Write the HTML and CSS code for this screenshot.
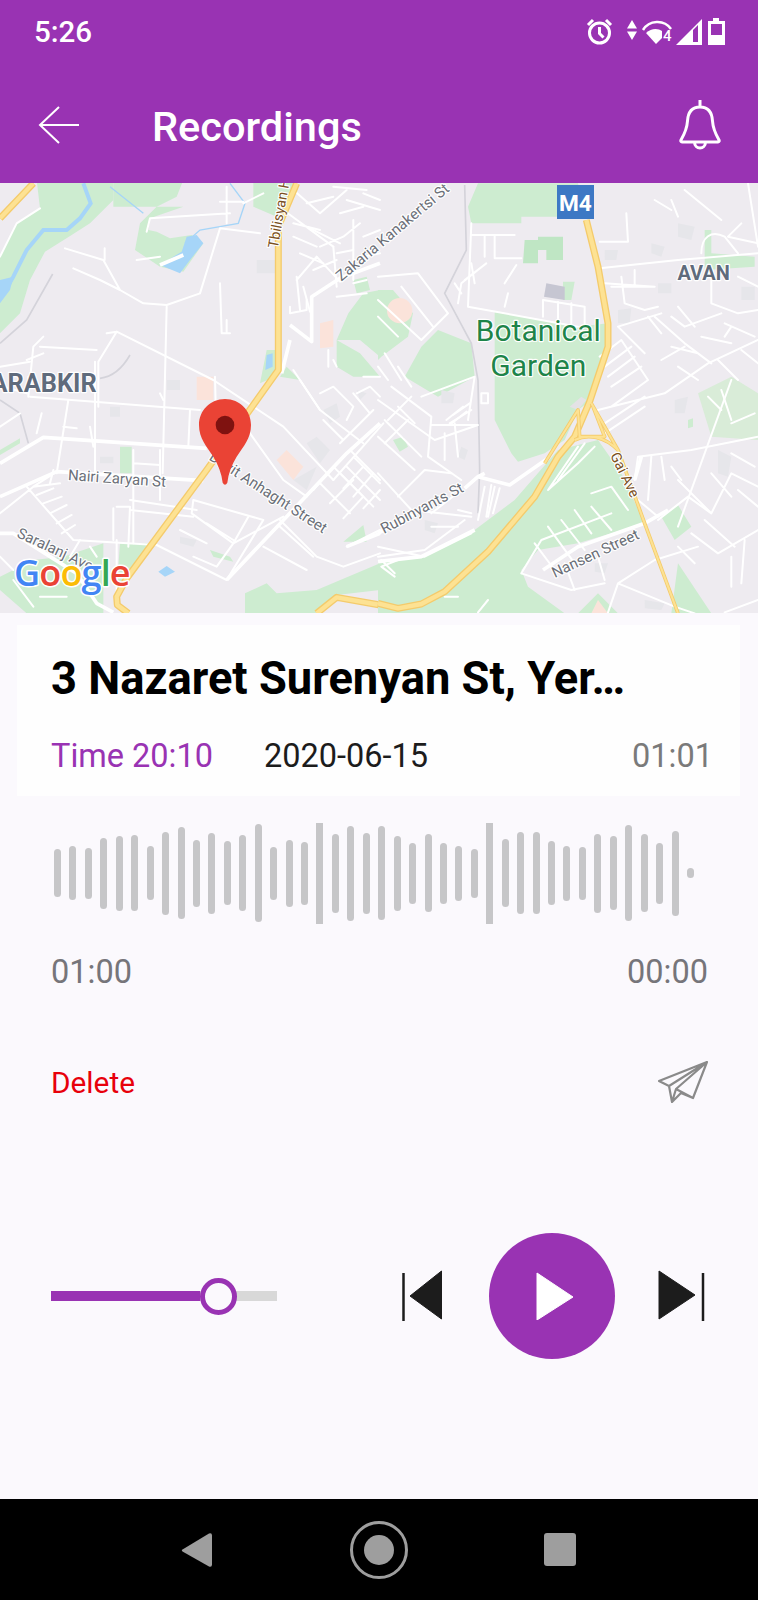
FILE: index.html
```html
<!DOCTYPE html>
<html lang="en">
<head>
<meta charset="utf-8">
<title>Recordings</title>
<link rel="stylesheet" href="styles.css">
</head>
<body>
<div class="page">
  <header class="header">
    <div class="status">
      <span class="clock">5:26</span>
      <svg class="status-icons" viewBox="0 0 140 30" width="140" height="30">
        <g class="ic-line">
          <circle cx="13.5" cy="16" r="10"/>
          <path d="M13.5 10v6.5l4 4"/>
          <path d="M2 8l5-5M25 8l-5-5"/>
        </g>
        <path class="ic-fill" d="M46 3l5 8.500h-10zM41 14.500h10l-5 8.500z"/>
        <path class="ic-line-thin" d="M57 13C63 3 78 2 85 12"/>
        <path class="ic-fill" d="M60 16C65 11 72 11 76 14L76 21L70 27Z"/>
        <text class="wifi-4" x="77" y="24">4</text>
        <path class="ic-fill" fill-rule="evenodd" d="M90 28L116 2V28ZM107 13V25H112V8Z"/>
        <path class="ic-fill" fill-rule="evenodd" d="M127 1h6v3h6v24h-17V4h5zM125 7v11h11V7z"/>
      </svg>
    </div>
    <div class="appbar">
      <svg class="back" viewBox="0 0 42 38" width="42" height="38"><path d="M21 1L2 19L21 37M2 19H41"/></svg>
      <h1 class="screen-title">Recordings</h1>
      <svg class="bell" viewBox="0 0 42 51" width="42" height="51"><path d="M21 1V8M21 8C12.500 8 9 14 8.500 22C8 30 5.500 35 2 41C1.500 42 2 43 3 43H39C40 43 40.500 42 40 41C36.500 35 34 30 33.500 22C33 14 29.500 8 21 8ZM15.500 43C15.500 51 26.500 51 26.500 43"/></svg>
    </div>
  </header>

  <svg class="map" viewBox="0 0 758 430" width="758" height="430">
    <rect class="land" width="758" height="430"/>

    <g transform="translate(0 -3) scale(.33333)">
      <path class="green" d="M110 0H340V60L270 130L215 165L135 215L90 300L60 400L0 460V230L50 130L120 85Z"/>
      <path class="green" d="M340 0H550L530 50L470 80L420 130L405 210L480 260L550 275L610 190L575 165L510 175L470 155L445 150L450 115L550 80H340Z"/>
      <path class="green" d="M760 0H885L830 110L760 80Z"/>
      <path class="green" d="M780 610L800 510H825V590ZM360 800H395V880H360ZM1030 1085L1090 1035L1100 1085ZM630 1110L690 1130L700 1145L640 1130ZM0 810L60 775L60 790L0 825Z"/>
      <path class="green" d="M1045 400L1090 340L1140 330V530L1080 480L1010 480ZM1010 480L1080 520L1140 590H1060L1010 560Z"/>
      <path class="green" d="M190 1130L310 1090V1300H80L0 1230V1190L100 1140ZM360 1090H450L370 1230H350Z"/>
      <path class="green" d="M735 1300V1240L800 1210L830 1240L950 1230L1140 1150V1230L1010 1245L950 1300Z"/>
      <path class="green" d="M840 590L860 560L900 600ZM1060 300L1100 290L1110 330L1070 340Z"/>
      <path class="pink" d="M590 590H640V660H590ZM830 840L860 810L910 860L880 900ZM960 430L1000 420V500L960 505Z"/>
      <path class="gray-block" d="M920 790L950 770L990 810L960 850ZM970 690L1010 670L1020 710L990 730ZM880 900L950 860L920 930ZM770 240H830V280H770ZM540 1070L590 1080L580 1100L540 1090ZM1070 630L1100 640L1080 660ZM500 600H540V630H500ZM330 680H360V710H330ZM300 830H340V850H300Z"/>
      <path class="water-line" d="M250 10L272 70L240 115L200 150L130 150L80 210L40 290L12 340"/>
      <path class="water-line-thin" d="M330 20L430 100M690 10L735 70L715 130L600 150L555 190"/>
      <path class="water" d="M0 300L40 290L30 330L0 370ZM480 255L540 280L570 240L610 190L590 165L560 170L545 215ZM796 570L800 525L818 520L818 560ZM475 1175L500 1158L525 1175L495 1190Z"/>
      <path class="rail" d="M158 282L80 420L0 490M390 525C370 560 340 590 300 595M0 660L60 700L85 790"/>

      <g class="r">
        <path d="M120 85L50 130L0 230M195 205L310 240L360 330L430 370L500 375L600 340L660 145L780 160M220 265L300 300L360 330M314 205L314 240"/>
        <path d="M440 155L450 115L690 100M680 20V130M660 65H730M730 70L790 40M410 240L480 230"/>
        <path d="M500 380L488 880M660 310L665 460H690M680 420V455"/>
        <path d="M320 460L350 455L640 600L850 740L1000 900M350 455L295 545V680"/>
        <path d="M90 650L600 690M285 545V880M120 500L290 510M130 470L100 500L85 650L85 590"/>
        <path d="M205 660L170 880M190 740L230 745M125 700L110 760M270 740L280 800M0 560L90 545M0 740L60 700M80 540L130 520M10 620L80 640"/>
        <path d="M400 810V960H390M400 850L480 855M480 810V960M400 960V1090M390 960L590 990M390 990L580 1010"/>
        <path d="M570 690L565 800M645 590L650 800M480 640L490 660"/>
        <path d="M0 1000L100 920L170 875M80 920L220 1080L470 1095M100 920L180 910M110 945L160 925M130 970L185 950M150 1000L200 975M170 1030L215 1005M185 1060L225 1035"/>
        <path d="M350 980H390L385 1100M340 985V1080M350 1080V1240"/>
        <path d="M580 960L790 1020L680 1200L470 1095M580 960L575 1000L700 1090L850 1010M700 1090L650 1160L580 1130M745 1010L700 1090M620 1030L700 1080M540 1050L620 1090M790 1100L920 1170"/>
        <path d="M1000 900L1150 730M1050 810L1140 900M1000 860L1090 950M960 910L1050 1000M1090 950L1030 1015M1060 900L990 970M1000 860L940 930"/>
        <path d="M1020 880L1120 980M1040 860L1140 960M1065 835L1140 910M1030 925L1090 860M1060 950L1120 880M1090 985L1140 930"/>
        <path d="M840 1020L950 1130L1030 1160L1140 1120M1040 1100L1140 1050M840 1040L940 1130"/>
        <path d="M900 600L960 690L1090 790M960 640L1000 620L1060 680L1040 720M1070 640L1110 620L1140 650M1090 590H1140M1000 540L1010 560M985 510L985 560"/>
        <path d="M870 380V400L920 390V360M890 290L900 390M890 300L950 230L1020 305M940 270L1010 240M960 200L1030 170L1080 130M1000 200L1010 320M1060 120V300M1060 310L1100 300M1010 350L1100 340M920 140L1020 190"/>
        <path d="M850 90L1000 200M880 30L960 100L1040 30M1040 60L1140 90M920 70L1000 50M880 130L960 150M880 170L950 200M900 220L970 250M910 320L930 395M1020 100L1090 80M1090 40L1140 60M1090 170L1140 150M1090 230L1140 220M1000 20L1100 30M1010 220L1060 210"/>
        <path d="M750 760L850 900L920 950M880 570L960 690M970 720L1030 780L1120 690M1060 640L1110 700M1020 790L1080 730"/>
        <path d="M240 1080L210 1130M270 1100L290 1130M160 870L150 910M0 1130L40 1170M40 1200L100 1280M120 1250L200 1250"/>
      </g>
      <g class="rw">
        <path d="M0 850L130 772L620 805"/>
        <path d="M0 950L170 875L610 902"/>
        <path d="M870 435L935 485L935 350L1020 295L1140 250"/>
        <path d="M845 580L870 480"/>
        <path d="M680 1200L1040 820L1140 730"/>
        <path d="M1040 1100L1140 1060"/>
        <path d="M0 1060H40L230 1180L290 1270L340 1297"/>
        <path d="M480 255L550 225"/>
      </g>
      <g class="hw">
        <path class="hw-o" d="M0 115L100 10M890 10L835 140V570L620 870L380 1195L350 1250L352 1275L385 1300M950 1300L1010 1252L1140 1275"/>
        <path class="hw-i" d="M0 115L100 10M890 10L835 140V570L620 870L380 1195L350 1250L352 1275L385 1300M950 1300L1010 1252L1140 1275"/>
      </g>
      <text class="lbl road" transform="translate(833 206) rotate(-80)">Tbilisyan Hwy</text>
      <text class="lbl dist" x="290" y="635" text-anchor="end">ARABKIR</text>
      <text class="lbl street" transform="translate(203 900) rotate(4)">Nairi Zaryan St</text>
      <text class="lbl street" transform="translate(625 838) rotate(33)">Davit Anhaght Street</text>
      <text class="lbl street" transform="translate(48 1070) rotate(25)">Saralanj Ave</text>
      <text class="lbl street" transform="translate(1024 305) rotate(-40)">Zakaria Kanakertsi St</text>
      <text class="lbl google" x="42" y="1218"><tspan class="g-b">G</tspan><tspan class="g-r">o</tspan><tspan class="g-y">o</tspan><tspan class="g-b">g</tspan><tspan class="g-g">l</tspan><tspan class="g-r">e</tspan></text>
      <path class="pin" d="M675 657C720 657 753 692 753 735C753 775 730 800 710 830C695 855 685 880 682 908Q675 920 668 908C665 880 655 855 640 830C620 800 597 775 597 735C597 692 630 657 675 657Z"/>
      <circle class="pin-dot" cx="675" cy="735" r="28"/>
    </g>

    <g transform="translate(378 -3) scale(.33333)">
      <path class="green" d="M270 80L300 10H600L625 110H430V130H280Z"/>
      <path class="green-soft" d="M440 180H480V170H555V240H505V210H480V250H435Z"/>
      <path class="green" d="M350 395L600 440L690 430L680 520L640 660L600 690L560 780L500 820L420 845L400 820L350 720Z"/>
      <path class="green" d="M0 1300V1145L130 1130L290 1050L410 960L540 810L660 780L730 880L800 1030L600 1090L480 1110L430 1170L450 1220L560 1300Z"/>
      <path class="green" d="M0 330H45L105 400L90 470L10 530L0 540ZM130 500L180 450L280 490L290 590L180 650L80 590ZM850 1010L900 975L940 1040L890 1080ZM880 1300L900 1150L1000 1300ZM980 150H1000V220L1130 230V260L980 270ZM600 1300L660 1240L720 1300ZM45 780L75 770L90 800L65 815ZM930 720L945 715L945 740L930 745ZM555 305H590L580 360H555Z"/>
      <path class="green-pale" d="M960 640L1060 590L1140 640V780L1000 770Z"/>
      <circle class="pink" cx="65" cy="392" r="38"/>
      <path class="pink" d="M640 1300L660 1260L690 1300Z"/>
      <path class="gray-dot" d="M505 310L560 320L560 360L498 350Z"/>
      <path class="gray-block" d="M820 190L860 200L850 230L820 220ZM680 210H720L715 240H680ZM720 390L760 385L755 430L720 430ZM900 130L950 140L940 180L900 170ZM840 310L880 310V340L840 340ZM1090 320H1130V360H1090ZM890 660L930 650L920 700L890 700ZM190 630L230 640L225 670L190 670ZM1020 810L1060 830L1050 890L1020 880ZM650 1150L690 1150L680 1180L650 1175ZM800 1260L860 1270L850 1290L800 1285ZM250 800L270 810L260 840L240 830ZM140 1020L180 1030L170 1060L140 1050Z"/>
      <path class="rail" d="M260 15L265 210L200 340L280 490L300 600L305 870L300 1000"/>
      <g class="r">
        <path d="M0 290L120 280L210 400L130 480L0 360M70 320L165 440M0 410L60 470M280 130L270 380L600 440M280 165H410M320 165V230M350 165V235H430M415 255L380 310"/>
        <path d="M240 370L250 310L325 250L260 300M230 310L250 340M280 250L290 310M390 340L380 380"/>
        <path d="M495 360V410M495 360L620 380V440M540 365V415M580 370V430"/>
        <path d="M0 660L170 780L300 735H160M40 620L160 710L150 830L250 900M20 720L130 830M0 770L110 870M130 650L290 590L270 720M200 760V840M230 730L240 830M280 690L215 730M310 640V670H330V640Z"/>
        <path d="M205 720L255 680M215 735L265 695M225 705L275 670M0 560L30 600M20 520L70 600M60 560L100 620M100 650L30 720M60 680L110 730M90 720L20 790"/>
        <path d="M0 880L100 990L280 1010M60 950L140 870L220 880M160 1000L250 930M0 1100L140 1130L280 1060M60 1140L10 1160L50 1190"/>
        <path d="M340 915L325 1010M365 925L345 1000"/>
        <path d="M665 185H750L745 100M665 265L900 240L1140 220M680 310L830 320L700 320M730 290L740 370L800 390L840 380M770 270V320M665 530L730 480L810 600L700 680M680 560L760 500M690 590L770 530M700 620L790 560M800 520L720 440L850 400M660 690L860 640L990 550L1140 480M680 730L800 650M680 760L800 680"/>
        <path d="M880 410L920 440L1030 400M830 410L920 490L1000 550M900 380L950 440M1000 280V370L1080 400L1140 390M1040 430L1130 470M1040 470L1060 440M970 470L1060 490M810 410L850 460M880 500L960 520M850 540L920 500M900 560L960 600M1090 510L1140 550M1020 540L1080 600"/>
        <path d="M970 220C970 170 1000 150 1040 170L1080 220M1090 130L1050 170L1140 190M880 60L900 110M920 30L1030 120M1110 10L1140 200M830 60L880 90M1080 290L1140 320"/>
        <path d="M770 900L780 830L940 810L1140 770M820 830L810 960M850 830L860 900M880 860L910 900M780 960L840 1010M990 650L1030 690M1030 630L1060 720M1060 730L1130 700"/>
        <path d="M840 1020L930 950L1000 1000L1060 880L1140 920M900 900L1000 1000M1000 880L1060 950M940 1060L1020 1120L1140 1050M980 1020L1070 1100M1060 1130V1220M1100 1080L1090 1210M1060 820L1130 860M1080 930L1140 980"/>
        <path d="M690 1297L720 1210L830 1140L960 1100M720 1210L890 1280L950 1300M900 1100L950 1150M1040 1297L1140 1260"/>
        <path d="M430 1180L490 1080L700 1000M470 1090L530 1170M510 1040L590 1150M550 1020L620 1110M590 990L640 1060M640 980L700 1050M430 1180L580 1230L680 1210M560 1150L590 1230M660 1130L680 1200M640 940L700 920L750 990"/>
        <path d="M0 1130L140 1110L260 1020M300 1297L330 1260M200 1250L240 1250M10 1140L50 1180M320 920L300 1020M350 920L330 1010"/>
        <path d="M600 800L510 930L600 850L650 800M620 790L540 900"/>
        <path d="M240 990L280 1000M160 1040L240 1040"/>
        <path d="M900 1040L1060 600"/>
      </g>
      <g class="rw">
        <path d="M0 1060L130 990M260 925L300 890L395 915L510 835M300 890L320 880"/>
        <path d="M770 900L790 830"/>
        <path d="M800 1030L870 990"/>
        <path d="M495 1170L600 1100L800 1030"/>
        <path d="M0 1145L130 1130L290 1050"/>
      </g>
      <path class="land-patch" d="M575 680L610 650L625 660L600 690Z"/>
      <g class="hw">
        <path class="hw-o" d="M0 1270L60 1285L130 1272L200 1235L330 1115L470 950L540 830L590 770L635 665L690 500V430L660 260L625 120"/>
        <path class="hw-i" d="M0 1270L60 1285L130 1272L200 1235L330 1115L470 950L540 830L590 770L635 665L690 500V430L660 260L625 120"/>
        <path class="hw-o thin" d="M640 670L720 810L800 1030L900 1300M500 850L600 690L605 770L660 770L680 770L645 680M590 780C630 760 680 770 720 810"/>
        <path class="hw-i thin" d="M640 670L720 810L800 1030L900 1300M500 850L600 690L605 770L660 770L680 770L645 680M590 780C630 760 680 770 720 810"/>
      </g>
      <text class="lbl street" transform="translate(18 1062) rotate(-28)">Rubinyants St</text>
      <text class="lbl road" transform="translate(696 826) rotate(64)">Gai Ave</text>
      <text class="lbl street" transform="translate(530 1194) rotate(-25)">Nansen Street</text>
      <text class="lbl dist avan" x="977" y="300" text-anchor="middle">AVAN</text>
      <text class="lbl poi" x="481" y="483" text-anchor="middle">Botanical</text>
      <text class="lbl poi" x="481" y="587" text-anchor="middle">Garden</text>
      <rect class="shield" x="537" y="15" width="111" height="102"/>
      <text class="shield-text" x="592" y="92" text-anchor="middle">M4</text>
    </g>
  </svg>

  <main class="content">
    <section class="card">
      <h2 class="place">3 Nazaret Surenyan St, Yer…</h2>
      <div class="meta">
        <span class="meta-time">Time 20:10</span>
        <span class="meta-date">2020-06-15</span>
        <span class="meta-length">01:01</span>
      </div>
    </section>

    <div class="wave">
      <i class="bar" style="height:48px"></i>
      <i class="bar" style="height:54px"></i>
      <i class="bar" style="height:51px"></i>
      <i class="bar" style="height:71px"></i>
      <i class="bar" style="height:75px"></i>
      <i class="bar" style="height:76px"></i>
      <i class="bar" style="height:54px"></i>
      <i class="bar" style="height:83px"></i>
      <i class="bar" style="height:92px"></i>
      <i class="bar" style="height:67px"></i>
      <i class="bar" style="height:81px"></i>
      <i class="bar" style="height:64px"></i>
      <i class="bar" style="height:76px"></i>
      <i class="bar" style="height:98px"></i>
      <i class="bar" style="height:53px"></i>
      <i class="bar" style="height:67px"></i>
      <i class="bar" style="height:63px"></i>
      <i class="bar bar-flat" style="height:101px"></i>
      <i class="bar" style="height:79px"></i>
      <i class="bar" style="height:95px"></i>
      <i class="bar" style="height:81px"></i>
      <i class="bar" style="height:94px"></i>
      <i class="bar" style="height:75px"></i>
      <i class="bar" style="height:61px"></i>
      <i class="bar" style="height:78px"></i>
      <i class="bar" style="height:61px"></i>
      <i class="bar" style="height:55px"></i>
      <i class="bar" style="height:49px"></i>
      <i class="bar bar-flat" style="height:101px"></i>
      <i class="bar" style="height:68px"></i>
      <i class="bar" style="height:82px"></i>
      <i class="bar" style="height:82px"></i>
      <i class="bar" style="height:64px"></i>
      <i class="bar" style="height:55px"></i>
      <i class="bar" style="height:53px"></i>
      <i class="bar" style="height:79px"></i>
      <i class="bar" style="height:74px"></i>
      <i class="bar" style="height:96px"></i>
      <i class="bar" style="height:78px"></i>
      <i class="bar" style="height:61px"></i>
      <i class="bar" style="height:85px"></i>
      <i class="bar" style="height:10px"></i>
    </div>

    <div class="times">
      <span>01:00</span>
      <span>00:00</span>
    </div>

    <div class="actions">
      <span class="delete">Delete</span>
      <svg class="send" viewBox="0 0 50 42" width="50" height="42"><path d="M49 1L1 20L11 25L14 41L23 32L35 37ZM49 1L11 25M49 1L18 28L14 41M18 28L35 37"/></svg>
    </div>

    <div class="player">
      <div class="slider">
        <div class="slider-fill"></div>
        <div class="slider-rest"></div>
        <div class="slider-thumb"></div>
      </div>
      <div class="controls">
        <svg class="skip" viewBox="0 0 42 52" width="42" height="52"><path class="skip-bar" d="M1.500 3V51"/><path class="skip-tri" d="M8 26L39.500 1V49Z"/></svg>
        <button class="play" type="button" aria-label="Play">
          <svg viewBox="0 0 38 48" width="38" height="48"><path d="M1 1L37 25L1 48Z"/></svg>
        </button>
        <svg class="skip" viewBox="0 0 47 52" width="47" height="52"><path class="skip-tri" d="M1 1L37 25L1 49Z"/><path class="skip-bar" d="M45 3V51"/></svg>
      </div>
    </div>
  </main>

  <nav class="navbar">
    <svg viewBox="0 0 32 36" width="32" height="36"><path class="nav-fill" d="M1.500 17.500L28 1.500Q31 0.500 31 3.500V32.500Q31 35.500 28 34.500L1.500 19.500Q0 18.500 1.500 17.500Z"/></svg>
    <svg viewBox="0 0 60 60" width="60" height="60"><circle class="nav-ring" cx="30" cy="30" r="27.500"/><circle class="nav-fill" cx="30" cy="30" r="15"/></svg>
    <span class="nav-square"></span>
  </nav>
</div>
</body>
</html>
```

FILE: styles.css
```css
* { box-sizing: border-box; }
html, body { margin: 0; padding: 0; }
body { font-family: Roboto, "Liberation Sans", sans-serif; background: #fbf9fd; }

.page { width: 758px; height: 1600px; display: flex; flex-direction: column; overflow: hidden; }

/* header */
.header { height: 183px; background: #9933b3; color: #fff; flex: none; }
.status { height: 64px; padding: 0 32px 0 34px; display: flex; align-items: center; justify-content: space-between; }
.clock { font-size: 29.500px; font-weight: 500; }
.status-icons { display: block; }
.ic-line { fill: none; stroke: #fff; stroke-width: 3; }
.ic-line-thin { fill: none; stroke: #fff; stroke-width: 2.500; }
.ic-fill { fill: #fff; }
.wifi-4 { fill: #fff; font-size: 15px; font-weight: 500; font-family: Roboto, sans-serif; }

.appbar { height: 119px; padding: 0 37px 0 38px; display: flex; align-items: center; }
.back { fill: none; stroke: #fff; stroke-width: 2; flex: none; margin-top: 2px; }
.screen-title { margin: 5px 0 0 72px; font-size: 41.500px; font-weight: 500; flex: 1; }
.bell { fill: none; stroke: #fff; stroke-width: 3; flex: none; margin-top: 2px; }

/* map */
.map { display: block; flex: none; }
.land { fill: #eeebf0; }
.green { fill: #cdecd0; }
.green-soft { fill: #bfe6c4; }
.green-pale { fill: #d9ecd8; }
.pink { fill: #fbe3da; }
.gray-block { fill: #e6e6ea; }
.gray-dot { fill: #c6c6d2; }
.land-patch { fill: #e4e2e6; }
.water { fill: #a6d5f8; }
.water-line { fill: none; stroke: #a6d5f8; stroke-width: 12; }
.water-line-thin { fill: none; stroke: #a6d5f8; stroke-width: 4; }
.rail { fill: none; stroke: #d4d3da; stroke-width: 5; }
.r { fill: none; stroke: #fff; stroke-width: 6; stroke-linejoin: round; stroke-linecap: round; }
.rw { fill: none; stroke: #fff; stroke-width: 11; stroke-linejoin: round; }
.hw { fill: none; stroke-linejoin: round; }
.hw-o { stroke: #f4cb6c; stroke-width: 21; }
.hw-i { stroke: #fde293; stroke-width: 13; }
.hw-o.thin { stroke-width: 11; }
.hw-i.thin { stroke-width: 6; }
.lbl { font-family: Roboto, sans-serif; paint-order: stroke; stroke: #fff; stroke-width: 7; stroke-linejoin: round; }
.street { font-size: 45px; fill: #6b6f78; }
.road { font-size: 43px; fill: #7a4f1d; }
.dist { font-size: 76px; font-weight: 700; fill: #5f6b7c; }
.avan { font-size: 60px; }
.poi { font-size: 90px; fill: #1e8449; }
.google { font-size: 108px; font-family: "Open Sans", sans-serif; font-weight: 600; letter-spacing: -2.500px; stroke-width: 9; }
.g-b { fill: #4285f4; }
.g-r { fill: #ea4335; }
.g-y { fill: #fbbc05; }
.g-g { fill: #34a853; }
.pin { fill: #ea4335; }
.pin-dot { fill: #7f1210; }
.shield { fill: #3d78c4; }
.shield-text { fill: #fff; font-family: Roboto, sans-serif; font-weight: 700; font-size: 68px; }

/* content */
.content { flex: 1; display: flex; flex-direction: column; background: #fbf9fd; min-height: 0; }
.card { height: 171px; margin: 12px 18px 0 17px; padding: 26px 27px 0 34px; background: #fefefe; }
.place { margin: 0; font-size: 45.300px; line-height: 56px; font-weight: 700; color: #000; white-space: nowrap; }
.meta { margin-top: 29px; display: flex; font-size: 32.500px; line-height: 40px; }
.meta-time { color: #9933b3; width: 213px; }
.meta-date { color: #1c1c1c; }
.meta-length { color: #7a7a7a; margin-left: auto; }

.wave { height: 104px; margin-top: 25px; padding-left: 54px; display: flex; align-items: center; gap: 8.450px; }
.bar { flex: none; width: 7px; background: #c6c6c8; border-radius: 4px; }
.bar-flat { border-radius: 0; }

.times { margin-top: 27px; padding: 0 50px 0 51px; display: flex; justify-content: space-between; font-size: 32.500px; line-height: 40px; color: #76757a; }

.actions { margin-top: 67px; padding: 0 50px 0 51px; height: 42px; display: flex; justify-content: space-between; align-items: center; }
.delete { font-size: 29.800px; color: #e8000b; margin-top: 4px; }
.send { fill: none; stroke: #8a8a8a; stroke-width: 2.200; stroke-linejoin: round; margin-top: 4px; }

.player { margin-top: 132px; padding: 0 53px 0 51px; height: 126px; display: flex; align-items: center; justify-content: space-between; }
.slider { position: relative; width: 226px; height: 10px; display: flex; }
.slider-fill { width: 149px; background: #9933b3; }
.slider-rest { flex: 1; background: #d8d8d8; }
.slider-thumb { position: absolute; left: 149px; top: -13.500px; width: 37px; height: 37px; border-radius: 50%; border: 5px solid #9933b3; background: #fbf9fd; }
.controls { display: flex; align-items: center; }
.skip { display: block; }
.skip-tri { fill: #1c1c1c; stroke: #1c1c1c; stroke-width: 1; stroke-linejoin: round; }
.skip-bar { fill: none; stroke: #1c1c1c; stroke-width: 2.500; }
.play { width: 126px; height: 126px; margin: 0 43px 0 45px; padding: 0 0 0 6px; border: 0; border-radius: 50%; background: #9933b3; display: flex; align-items: center; justify-content: center; }
.play svg { display: block; fill: #fff; stroke: #fff; stroke-width: 1; stroke-linejoin: round; }

/* nav */
.navbar { height: 101px; flex: none; background: #000; padding: 0 182px 0 181px; display: flex; align-items: center; justify-content: space-between; }
.nav-fill { fill: #9e9e9e; }
.nav-ring { fill: none; stroke: #9e9e9e; stroke-width: 3; }
.nav-square { width: 32px; height: 33px; background: #9e9e9e; border-radius: 3px; }
```
